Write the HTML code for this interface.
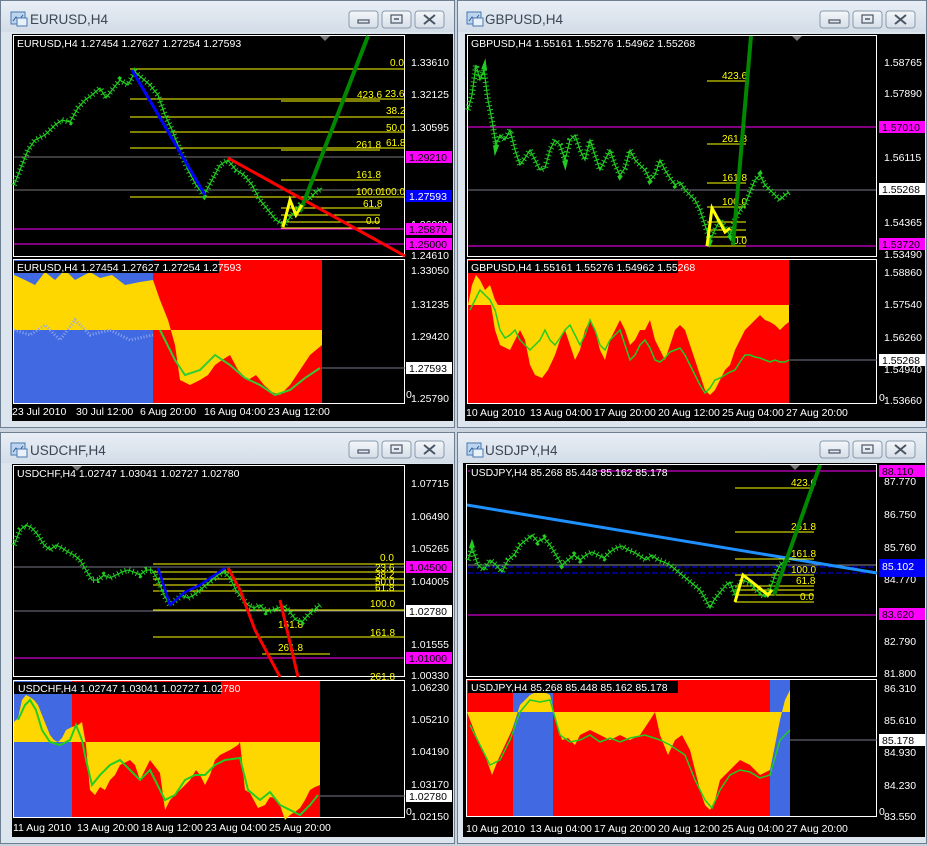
<!DOCTYPE html>
<html><head><meta charset="utf-8"><style>
html,body{margin:0;padding:0;background:#c9d3de;width:927px;height:846px;overflow:hidden}
svg{display:block}
text{font-family:"Liberation Sans",sans-serif}
</style></head><body>
<svg width="927" height="846" viewBox="0 0 927 846" xmlns="http://www.w3.org/2000/svg">
<defs>
<linearGradient id="tb" x1="0" y1="0" x2="0" y2="1"><stop offset="0" stop-color="#e8eef5"/><stop offset="1" stop-color="#d3dde8"/></linearGradient>
<linearGradient id="bt" x1="0" y1="0" x2="0" y2="1"><stop offset="0" stop-color="#f4f7fa"/><stop offset="1" stop-color="#d6dee8"/></linearGradient>
<g id="btns">
<rect x="0" y="0" width="29" height="17" rx="3" fill="url(#bt)" stroke="#8a9aab"/>
<rect x="9" y="9" width="11" height="3" fill="none" stroke="#4a5563" stroke-width="1.2"/>
<rect x="33" y="0" width="29" height="17" rx="3" fill="url(#bt)" stroke="#8a9aab"/>
<rect x="42" y="4" width="11" height="8" fill="none" stroke="#4a5563" stroke-width="1.2"/><line x1="45" y1="8" x2="50" y2="8" stroke="#4a5563" stroke-width="1.5"/>
<rect x="66" y="0" width="29" height="17" rx="3" fill="url(#bt)" stroke="#8a9aab"/>
<path d="M75 4 L86 13 M86 4 L75 13" stroke="#4a5563" stroke-width="2"/>
</g>
<g id="ico"><rect x="0" y="0" width="14" height="12" fill="#bcd4ee" stroke="#4a78b0"/><path d="M2 9 L5 5 L8 8 L12 3" stroke="#2a5a9a" fill="none"/><rect x="6" y="6" width="10" height="8" fill="#e8f0fa" stroke="#4a78b0"/></g>
</defs>

<!-- ========== WINDOW 1 ========== -->
<g>
<rect x="0.5" y="0.5" width="454" height="427" fill="#dce5ee" stroke="#6f7f92"/>
<rect x="1" y="1" width="453" height="31" fill="url(#tb)"/>
<use href="#ico" x="11" y="12"/>
<text x="30" y="24" font-size="13.5" fill="#3a4655">EURUSD,H4</text>
<use href="#btns" x="349" y="11"/>
<rect x="12" y="34" width="441" height="387" fill="#000"/>
<rect x="13.5" y="35.5" width="391" height="221" fill="none" stroke="#fff"/>
<polygon points="320,36 330,36 325,41" fill="#777"/>
<text x="17" y="47" font-size="10.5" fill="#fff">EURUSD,H4  1.27454 1.27627 1.27254 1.27593</text>
<line x1="14" y1="157" x2="404" y2="157" stroke="#777"/>
<line x1="14" y1="190" x2="404" y2="190" stroke="#777"/>
<line x1="14" y1="229" x2="404" y2="229" stroke="#f0f"/>
<line x1="14" y1="244" x2="404" y2="244" stroke="#f0f"/>
<g stroke="#ff0" stroke-width="1">
<line x1="130" y1="69" x2="405" y2="69"/><line x1="130" y1="99" x2="405" y2="99"/><line x1="281" y1="101" x2="380" y2="101"/>
<line x1="130" y1="117" x2="405" y2="117"/><line x1="130" y1="132" x2="405" y2="132"/><line x1="130" y1="148" x2="405" y2="148"/>
<line x1="281" y1="150" x2="380" y2="150"/><line x1="281" y1="180" x2="380" y2="180"/><line x1="130" y1="197" x2="405" y2="197"/>
<line x1="281" y1="208" x2="380" y2="208"/><line x1="281" y1="215" x2="380" y2="215"/><line x1="281" y1="222" x2="380" y2="222"/><line x1="281" y1="228" x2="380" y2="228"/>
</g>
<g font-size="10" fill="#ff0">
<text x="390" y="66">0.0</text><text x="357" y="98">423.6</text><text x="385" y="97">23.6</text><text x="386" y="114">38.2</text><text x="386" y="131">50.0</text><text x="386" y="146">61.8</text><text x="356" y="148">261.8</text><text x="356" y="178">161.8</text><text x="356" y="195">100.0</text><text x="380" y="195">100.0</text><text x="363" y="207">61.8</text><text x="366" y="224">0.0</text>
</g>
<polyline points="14,185 20,170 28,150 35,140 45,135 55,125 62,120 70,122 78,108 85,100 92,95 100,88 106,98 112,90 120,80 128,85 135,72 142,78 150,85 158,95 165,115 172,130 180,150 188,170 196,185 204,195 212,180 220,165 228,160 236,170 244,175 252,185 260,200 268,210 276,220 284,225 292,215 300,205 308,200 316,192 322,188" fill="none" stroke="#2c2" stroke-width="6" stroke-dasharray="1,3"/>
<polyline points="14,185 20,170 28,150 35,140 45,135 55,125 62,120 70,122 78,108 85,100 92,95 100,88 106,98 112,90 120,80 128,85 135,72 142,78 150,85 158,95 165,115 172,130 180,150 188,170 196,185 204,195 212,180 220,165 228,160 236,170 244,175 252,185 260,200 268,210 276,220 284,225 292,215 300,205 308,200 316,192 322,188" fill="none" stroke="#2c2" stroke-width="1.2"/>
<line x1="132" y1="70" x2="205" y2="195" stroke="#00f" stroke-width="3"/>
<line x1="228" y1="158" x2="405" y2="256" stroke="#f00" stroke-width="3"/>
<line x1="300" y1="212" x2="368" y2="36" stroke="#080" stroke-width="4"/>
<polyline points="283,227 290,200 296,215 302,205" fill="none" stroke="#ff0" stroke-width="3"/>
<g font-size="10.5" fill="#fff">
<text x="411" y="66">1.33610</text><text x="411" y="98">1.32125</text><text x="411" y="131">1.30595</text>
<text x="411" y="228">1.26000</text><text x="411" y="259">1.24610</text>
</g>
<rect x="406" y="151" width="46" height="12" fill="#f0f"/><text x="409" y="161" font-size="10.5" fill="#000">1.29210</text>
<rect x="406" y="190" width="46" height="12" fill="#00f"/><text x="409" y="200" font-size="10.5" fill="#fff">1.27593</text>
<rect x="406" y="223" width="46" height="12" fill="#f0f"/><text x="409" y="233" font-size="10.5" fill="#000">1.25870</text>
<rect x="406" y="238" width="46" height="12" fill="#f0f"/><text x="409" y="248" font-size="10.5" fill="#000">1.25000</text>
<rect x="13.5" y="259.5" width="391" height="144" fill="none" stroke="#fff"/>
<rect x="14" y="260" width="139" height="143" fill="#4169e1"/>
<rect x="153" y="260" width="169" height="143" fill="#f00"/>
<polygon points="14,330 14,275 25,280 35,285 45,272 55,280 65,270 75,280 90,272 100,278 112,275 125,285 140,282 153,280 153,330" fill="#ffd700"/>
<polygon points="153,330 153,280 160,300 168,320 175,345 180,380 190,385 200,380 208,375 215,365 222,360 230,355 238,370 248,380 256,375 264,385 272,392 280,395 290,385 300,370 310,355 322,345 322,330" fill="#ffd700"/>
<polyline points="14,330 30,335 45,325 60,340 75,320 90,335 110,330 130,340 153,335" fill="none" stroke="#8fa8f0" stroke-width="3" stroke-dasharray="1,2"/>
<polyline points="160,330 175,360 185,375 200,370 215,355 230,365 245,378 260,385 275,395 290,390 305,378 320,368" fill="none" stroke="#3c3" stroke-width="2"/>
<rect x="14" y="261" width="205" height="12" fill="#000"/>
<text x="17" y="271" font-size="10.5" fill="#fff">EURUSD,H4  1.27454 1.27627 1.27254 1.27593</text>
<line x1="322" y1="368" x2="405" y2="368" stroke="#778"/>
<g font-size="10.5" fill="#fff">
<text x="411" y="274">1.33050</text><text x="411" y="308">1.31235</text><text x="411" y="340">1.29420</text><text x="406" y="398">0</text><text x="411" y="402">1.25790</text>
</g>
<rect x="406" y="362" width="46" height="12" fill="#fff"/><text x="409" y="372" font-size="10.5" fill="#000">1.27593</text>
<g font-size="10.5" fill="#fff"><text x="12" y="415">23 Jul 2010</text><text x="76" y="415">30 Jul 12:00</text><text x="140" y="415">6 Aug 20:00</text><text x="204" y="415">16 Aug 04:00</text><text x="268" y="415">23 Aug 12:00</text></g>
</g>

<!-- ========== WINDOW 2 ========== -->
<g>
<rect x="457.5" y="0.5" width="469" height="427" fill="#dce5ee" stroke="#6f7f92"/>
<rect x="458" y="1" width="468" height="31" fill="url(#tb)"/>
<use href="#ico" x="467" y="12"/>
<text x="485" y="24" font-size="13.5" fill="#3a4655">GBPUSD,H4</text>
<use href="#btns" x="820" y="11"/>
<rect x="465" y="34" width="460" height="387" fill="#000"/>
<rect x="467.5" y="35.5" width="409" height="221" fill="none" stroke="#fff"/>
<polygon points="792,36 802,36 797,41" fill="#777"/>
<text x="471" y="47" font-size="10.5" fill="#fff">GBPUSD,H4  1.55161 1.55276 1.54962 1.55268</text>
<line x1="468" y1="127" x2="876" y2="127" stroke="#f0f"/>
<line x1="468" y1="190" x2="876" y2="190" stroke="#778"/>
<line x1="468" y1="246" x2="876" y2="246" stroke="#f0f"/>
<g stroke="#ff0"><line x1="707" y1="81" x2="746" y2="81"/><line x1="707" y1="144" x2="746" y2="144"/><line x1="707" y1="183" x2="746" y2="183"/><line x1="707" y1="207" x2="746" y2="207"/><line x1="707" y1="246" x2="746" y2="246"/><line x1="707" y1="222" x2="746" y2="222"/><line x1="707" y1="230" x2="746" y2="230"/><line x1="707" y1="237" x2="746" y2="237"/></g>
<g font-size="10" fill="#ff0"><text x="722" y="79">423.6</text><text x="722" y="142">261.8</text><text x="722" y="181">161.8</text><text x="722" y="205">100.0</text><text x="733" y="244">0.0</text></g>
<polyline points="468,110 472,95 476,65 480,80 484,70 488,100 492,120 496,145 500,135 505,140 510,130 515,150 520,165 525,158 530,150 535,160 540,170 545,168 550,150 555,140 560,145 565,160 570,140 575,135 580,150 585,160 590,140 595,155 600,170 605,160 610,150 615,165 620,175 625,168 630,150 635,160 640,165 645,170 650,180 655,175 660,160 665,170 670,178 675,185 680,182 685,190 690,195 695,200 700,210 705,225 710,240 715,230 720,220 725,228 730,235 735,220 740,210 745,205 750,192 755,180 760,175 765,185 770,190 775,195 780,200 785,195 789,192" fill="none" stroke="#2c2" stroke-width="6" stroke-dasharray="1,3"/>
<polyline points="468,110 472,95 476,65 480,80 484,70 488,100 492,120 496,145 500,135 505,140 510,130 515,150 520,165 525,158 530,150 535,160 540,170 545,168 550,150 555,140 560,145 565,160 570,140 575,135 580,150 585,160 590,140 595,155 600,170 605,160 610,150 615,165 620,175 625,168 630,150 635,160 640,165 645,170 650,180 655,175 660,160 665,170 670,178 675,185 680,182 685,190 690,195 695,200 700,210 705,225 710,240 715,230 720,220 725,228 730,235 735,220 740,210 745,205 750,192 755,180 760,175 765,185 770,190 775,195 780,200 785,195 789,192" fill="none" stroke="#2c2" stroke-width="1.2"/>
<line x1="733" y1="245" x2="751" y2="36" stroke="#080" stroke-width="4"/>
<polyline points="707,246 712,208 725,232 730,228" fill="none" stroke="#ff0" stroke-width="3"/>
<g font-size="10.5" fill="#fff"><text x="884" y="66">1.58765</text><text x="884" y="97">1.57890</text><text x="884" y="161">1.56115</text><text x="884" y="226">1.54365</text><text x="884" y="258">1.53490</text></g>
<rect x="879" y="121" width="46" height="12" fill="#f0f"/><text x="882" y="131" font-size="10.5" fill="#000">1.57010</text>
<rect x="879" y="183" width="46" height="12" fill="#fff"/><text x="882" y="193" font-size="10.5" fill="#000">1.55268</text>
<rect x="879" y="238" width="46" height="12" fill="#f0f"/><text x="882" y="248" font-size="10.5" fill="#000">1.53720</text>
<rect x="467.5" y="259.5" width="409" height="144" fill="none" stroke="#fff"/>
<rect x="468" y="260" width="321" height="143" fill="#f00"/>
<polygon points="468,305 472,285 476,275 480,280 485,290 490,285 495,300 498,305" fill="#ffd700"/>
<polygon points="491,305 495,330 500,345 510,350 515,340 520,330 525,340 530,365 535,375 542,378 548,370 555,355 560,340 565,330 570,345 575,360 580,350 585,330 590,320 595,330 600,350 605,360 610,340 615,330 620,320 625,330 630,345 635,340 640,330 645,330 650,320 655,340 660,350 665,360 670,345 675,330 680,325 685,330 690,345 695,360 700,375 705,390 710,395 715,390 720,380 725,370 730,365 735,350 740,340 745,330 750,325 755,320 760,315 765,320 770,322 775,325 780,330 785,325 789,322 789,305" fill="#ffd700"/>
<polyline points="470,310 475,300 480,290 485,295 490,300 495,310 500,330 505,338 510,335 515,330 520,340 525,345 530,350 535,345 540,340 545,330 550,340 555,345 560,338 565,330 570,325 575,335 580,345 585,335 590,320 595,330 600,345 605,350 610,340 615,335 620,330 625,345 630,360 635,355 640,345 645,340 650,348 655,360 660,362 665,358 670,352 675,350 680,348 685,355 690,365 695,375 700,385 705,393 710,388 715,380 720,378 725,375 730,372 735,370 740,362 745,355 750,355 755,357 760,358 765,360 770,362 775,360 780,362 785,362 789,360" fill="none" stroke="#2c2" stroke-width="1.5"/>
<rect x="468" y="261" width="210" height="12" fill="#000"/>
<text x="471" y="271" font-size="10.5" fill="#fff">GBPUSD,H4  1.55161 1.55276 1.54962 1.55268</text>
<line x1="789" y1="360" x2="877" y2="360" stroke="#778"/>
<g font-size="10.5" fill="#fff"><text x="884" y="276">1.58860</text><text x="884" y="308">1.57540</text><text x="884" y="341">1.56260</text><text x="884" y="373">1.54940</text><text x="879" y="401">0</text><text x="884" y="404">1.53660</text></g>
<rect x="879" y="354" width="46" height="12" fill="#fff"/><text x="882" y="364" font-size="10.5" fill="#000">1.55268</text>
<g font-size="10.5" fill="#fff"><text x="466" y="416">10 Aug 2010</text><text x="530" y="416">13 Aug 04:00</text><text x="594" y="416">17 Aug 20:00</text><text x="658" y="416">20 Aug 12:00</text><text x="722" y="416">25 Aug 04:00</text><text x="786" y="416">27 Aug 20:00</text></g>
</g>

<!-- ========== WINDOW 3 ========== -->
<g>
<rect x="0.5" y="432.5" width="454" height="411" fill="#dce5ee" stroke="#6f7f92"/>
<rect x="1" y="433" width="453" height="30" fill="url(#tb)"/>
<use href="#ico" x="11" y="443"/>
<text x="30" y="455" font-size="13.5" fill="#3a4655">USDCHF,H4</text>
<use href="#btns" x="349" y="441"/>
<rect x="12" y="464" width="441" height="373" fill="#000"/>
<rect x="13.5" y="465.5" width="391" height="211" fill="none" stroke="#fff"/>
<polygon points="72,466 82,466 77,471" fill="#777"/>
<text x="17" y="477" font-size="10.5" fill="#fff">USDCHF,H4  1.02747 1.03041 1.02727 1.02780</text>
<line x1="14" y1="567" x2="404" y2="567" stroke="#778"/>
<line x1="14" y1="611" x2="404" y2="611" stroke="#778"/>
<line x1="14" y1="658" x2="404" y2="658" stroke="#f0f"/>
<g stroke="#ff0"><line x1="153" y1="564" x2="405" y2="564"/><line x1="153" y1="572" x2="405" y2="572"/><line x1="153" y1="579" x2="405" y2="579"/><line x1="153" y1="585" x2="405" y2="585"/><line x1="153" y1="591" x2="405" y2="591"/><line x1="153" y1="610" x2="405" y2="610"/><line x1="153" y1="637" x2="405" y2="637"/><line x1="262" y1="654" x2="330" y2="654"/></g>
<g font-size="10" fill="#ff0"><text x="380" y="561">0.0</text><text x="375" y="571">23.6</text><text x="375" y="578">38.2</text><text x="375" y="585">50.0</text><text x="375" y="591">61.8</text><text x="370" y="607">100.0</text><text x="370" y="636">161.8</text><text x="278" y="651">261.8</text><text x="278" y="628">161.8</text><text x="370" y="680">261.8</text></g>
<polyline points="14,545 20,530 26,525 32,528 38,535 44,545 50,550 56,545 62,548 68,552 74,555 80,560 86,570 92,580 98,580 104,575 110,578 116,575 122,572 128,570 134,572 140,575 146,570 152,570 158,580 164,595 170,605 176,600 182,595 188,598 194,595 200,590 206,585 212,580 218,575 224,572 230,578 236,590 242,598 248,605 254,608 260,605 266,612 272,610 278,608 284,606 290,612 296,620 302,622 308,615 314,610 320,605" fill="none" stroke="#2c2" stroke-width="6" stroke-dasharray="1,3"/>
<polyline points="14,545 20,530 26,525 32,528 38,535 44,545 50,550 56,545 62,548 68,552 74,555 80,560 86,570 92,580 98,580 104,575 110,578 116,575 122,572 128,570 134,572 140,575 146,570 152,570 158,580 164,595 170,605 176,600 182,595 188,598 194,595 200,590 206,585 212,580 218,575 224,572 230,578 236,590 242,598 248,605 254,608 260,605 266,612 272,610 278,608 284,606 290,612 296,620 302,622 308,615 314,610 320,605" fill="none" stroke="#2c2" stroke-width="1.2"/>
<polyline points="158,568 170,605 185,592 200,585 225,568" fill="none" stroke="#00f" stroke-width="2.5"/>
<polyline points="228,568 240,590 255,630 280,677" fill="none" stroke="#f00" stroke-width="3"/>
<line x1="280" y1="600" x2="298" y2="677" stroke="#f00" stroke-width="3"/>
<g font-size="10.5" fill="#fff"><text x="411" y="487">1.07715</text><text x="411" y="520">1.06490</text><text x="411" y="552">1.05265</text><text x="411" y="585">1.04005</text><text x="411" y="648">1.01555</text><text x="411" y="679">1.00330</text></g>
<rect x="406" y="561" width="46" height="12" fill="#f0f"/><text x="409" y="571" font-size="10.5" fill="#000">1.04500</text>
<rect x="406" y="605" width="46" height="12" fill="#fff"/><text x="409" y="615" font-size="10.5" fill="#000">1.02780</text>
<rect x="406" y="652" width="46" height="12" fill="#f0f"/><text x="409" y="662" font-size="10.5" fill="#000">1.01000</text>
<rect x="13.5" y="680.5" width="391" height="137" fill="none" stroke="#fff"/>
<rect x="14" y="681" width="58" height="136" fill="#4169e1"/>
<rect x="72" y="681" width="248" height="136" fill="#f00"/>
<polygon points="14,742 14,722 18,718 22,700 26,695 30,697 34,700 38,705 42,715 46,725 50,735 54,740 58,742 62,738 66,730 72,727 72,742" fill="#ffd700"/>
<polygon points="72,742 72,727 78,725 82,722 86,745 90,790 95,795 100,787 105,790 110,780 115,775 120,765 130,760 135,765 140,780 145,770 150,760 160,773 165,810 170,800 175,795 180,790 185,785 190,780 196,770 200,775 205,785 210,775 215,760 220,755 230,750 238,745 240,742 245,790 250,793 258,808 265,805 270,797 275,798 280,805 285,820 290,815 295,812 300,808 305,800 310,790 315,787 320,785 320,742" fill="#ffd700"/>
<polyline points="18,720 25,705 30,700 36,710 42,730 50,742 60,745 70,740 76,725 82,740 86,760 92,785 100,775 110,765 120,760 130,770 140,780 150,770 165,800 175,795 185,780 195,775 205,775 215,765 225,760 240,758 248,790 260,800 270,792 280,805 290,810 300,815 310,805 318,795" fill="none" stroke="#2c2" stroke-width="2"/>
<rect x="14" y="682" width="207" height="12" fill="#000"/>
<text x="18" y="692" font-size="10.5" fill="#fff">USDCHF,H4  1.02747 1.03041 1.02727 1.02780</text>
<line x1="320" y1="796" x2="405" y2="796" stroke="#778"/>
<g font-size="10.5" fill="#fff"><text x="411" y="691">1.06230</text><text x="411" y="723">1.05210</text><text x="411" y="755">1.04190</text><text x="411" y="788">1.03170</text><text x="406" y="815">0</text><text x="411" y="820">1.02150</text></g>
<rect x="406" y="790" width="46" height="12" fill="#fff"/><text x="409" y="800" font-size="10.5" fill="#000">1.02780</text>
<g font-size="10.5" fill="#fff"><text x="13" y="831">11 Aug 2010</text><text x="77" y="831">13 Aug 20:00</text><text x="141" y="831">18 Aug 12:00</text><text x="205" y="831">23 Aug 04:00</text><text x="269" y="831">25 Aug 20:00</text></g>
</g>

<!-- ========== WINDOW 4 ========== -->
<g>
<rect x="457.5" y="432.5" width="469" height="411" fill="#dce5ee" stroke="#6f7f92"/>
<rect x="458" y="433" width="468" height="30" fill="url(#tb)"/>
<use href="#ico" x="467" y="443"/>
<text x="485" y="455" font-size="13.5" fill="#3a4655">USDJPY,H4</text>
<use href="#btns" x="820" y="441"/>
<rect x="463" y="463" width="462" height="374" fill="#000"/>
<rect x="466.5" y="464.5" width="410" height="212" fill="none" stroke="#fff"/>
<polygon points="790,465 800,465 795,470" fill="#777"/>
<line x1="468" y1="471" x2="876" y2="471" stroke="#f0f"/>
<rect x="470" y="466" width="126" height="11" fill="#000"/>
<text x="471" y="476" font-size="10.5" fill="#fff">USDJPY,H4  85.268 85.448 85.162 85.178</text>
<line x1="468" y1="565" x2="876" y2="565" stroke="#888"/>
<line x1="468" y1="567" x2="876" y2="567" stroke="#00f" stroke-dasharray="5,3"/>
<line x1="468" y1="573" x2="876" y2="573" stroke="#00f" stroke-dasharray="5,3"/>
<line x1="468" y1="615" x2="876" y2="615" stroke="#f0f"/>
<line x1="467" y1="505" x2="877" y2="573" stroke="#1e90ff" stroke-width="3"/>
<g stroke="#ff0"><line x1="735" y1="488" x2="814" y2="488"/><line x1="735" y1="532" x2="814" y2="532"/><line x1="735" y1="559" x2="814" y2="559"/><line x1="735" y1="575" x2="814" y2="575"/><line x1="735" y1="586" x2="814" y2="586"/><line x1="735" y1="590" x2="814" y2="590"/><line x1="735" y1="595" x2="814" y2="595"/><line x1="735" y1="602" x2="814" y2="602"/></g>
<g font-size="10" fill="#ff0"><text x="791" y="486">423.6</text><text x="791" y="530">261.8</text><text x="791" y="557">161.8</text><text x="791" y="573">100.0</text><text x="796" y="584">61.8</text><text x="800" y="600">0.0</text></g>
<polyline points="468,560 472,548 478,565 484,570 490,560 496,565 502,572 508,560 514,555 520,545 526,540 532,535 538,542 544,538 550,545 556,555 562,565 568,560 574,555 580,560 586,555 592,552 598,555 604,558 610,552 616,548 622,546 628,550 634,552 640,556 646,560 652,555 658,560 664,562 670,565 676,570 682,575 688,580 694,585 700,590 706,600 710,608 714,600 718,595 722,590 726,585 730,582 735,595 742,580 750,583 756,590 765,597 770,590 775,575 780,565 786,560 790,562" fill="none" stroke="#2c2" stroke-width="6" stroke-dasharray="1,3"/>
<polyline points="468,560 472,548 478,565 484,570 490,560 496,565 502,572 508,560 514,555 520,545 526,540 532,535 538,542 544,538 550,545 556,555 562,565 568,560 574,555 580,560 586,555 592,552 598,555 604,558 610,552 616,548 622,546 628,550 634,552 640,556 646,560 652,555 658,560 664,562 670,565 676,570 682,575 688,580 694,585 700,590 706,600 710,608 714,600 718,595 722,590 726,585 730,582 735,595 742,580 750,583 756,590 765,597 770,590 775,575 780,565 786,560 790,562" fill="none" stroke="#2c2" stroke-width="1.2"/>
<line x1="774" y1="595" x2="820" y2="465" stroke="#080" stroke-width="4"/>
<polyline points="735,602 743,575 752,582 768,595 772,590" fill="none" stroke="#ff0" stroke-width="3"/>
<g font-size="10.5" fill="#fff"><text x="884" y="485">87.770</text><text x="884" y="518">86.750</text><text x="884" y="551">85.760</text><text x="884" y="583">84.770</text><text x="884" y="645">82.790</text><text x="884" y="677">81.800</text></g>
<rect x="879" y="465" width="46" height="12" fill="#f0f"/><text x="882" y="475" font-size="10.5" fill="#000">88.110</text>
<rect x="879" y="559" width="46" height="18" fill="#00f"/><text x="882" y="570" font-size="10.5" fill="#fff">85.102</text>
<rect x="879" y="608" width="46" height="12" fill="#f0f"/><text x="882" y="618" font-size="10.5" fill="#000">83.620</text>
<rect x="466.5" y="679.5" width="410" height="137" fill="none" stroke="#fff"/>
<rect x="467" y="680" width="323" height="136" fill="#f00"/>
<rect x="513" y="690" width="40" height="126" fill="#4169e1"/>
<rect x="770" y="680" width="20" height="136" fill="#4169e1"/>
<polygon points="467,712 470,720 478,740 485,755 492,775 498,760 505,745 512,730 520,705 530,695 540,690 550,695 556,720 562,740 568,738 575,745 580,735 590,730 600,735 610,740 620,735 630,740 640,735 650,720 655,712 660,735 668,755 675,740 682,735 690,750 695,770 700,790 705,805 710,810 715,800 720,780 730,770 740,760 750,765 760,775 770,770 775,745 780,720 785,700 790,690 790,712" fill="#ffd700"/>
<polyline points="470,725 480,745 490,765 500,760 510,740 520,712 530,700 540,702 550,700 560,735 570,742 580,740 590,735 600,742 610,738 620,742 630,738 645,735 660,740 670,745 685,755 695,780 705,800 712,808 720,790 730,775 740,770 750,772 760,778 770,775 780,740 790,730" fill="none" stroke="#2c2" stroke-width="1.5"/>
<rect x="468" y="681" width="210" height="12" fill="#000"/>
<text x="471" y="691" font-size="10.5" fill="#fff">USDJPY,H4  85.268 85.448 85.162 85.178</text>
<line x1="790" y1="740" x2="877" y2="740" stroke="#778"/>
<g font-size="10.5" fill="#fff"><text x="884" y="692">86.310</text><text x="884" y="724">85.610</text><text x="884" y="756">84.930</text><text x="884" y="789">84.230</text><text x="879" y="815">0</text><text x="884" y="820">83.550</text></g>
<rect x="879" y="734" width="46" height="12" fill="#fff"/><text x="882" y="744" font-size="10.5" fill="#000">85.178</text>
<g font-size="10.5" fill="#fff"><text x="466" y="832">10 Aug 2010</text><text x="530" y="832">13 Aug 04:00</text><text x="594" y="832">17 Aug 20:00</text><text x="658" y="832">20 Aug 12:00</text><text x="722" y="832">25 Aug 04:00</text><text x="786" y="832">27 Aug 20:00</text></g>
</g>
</svg>
</body></html>
